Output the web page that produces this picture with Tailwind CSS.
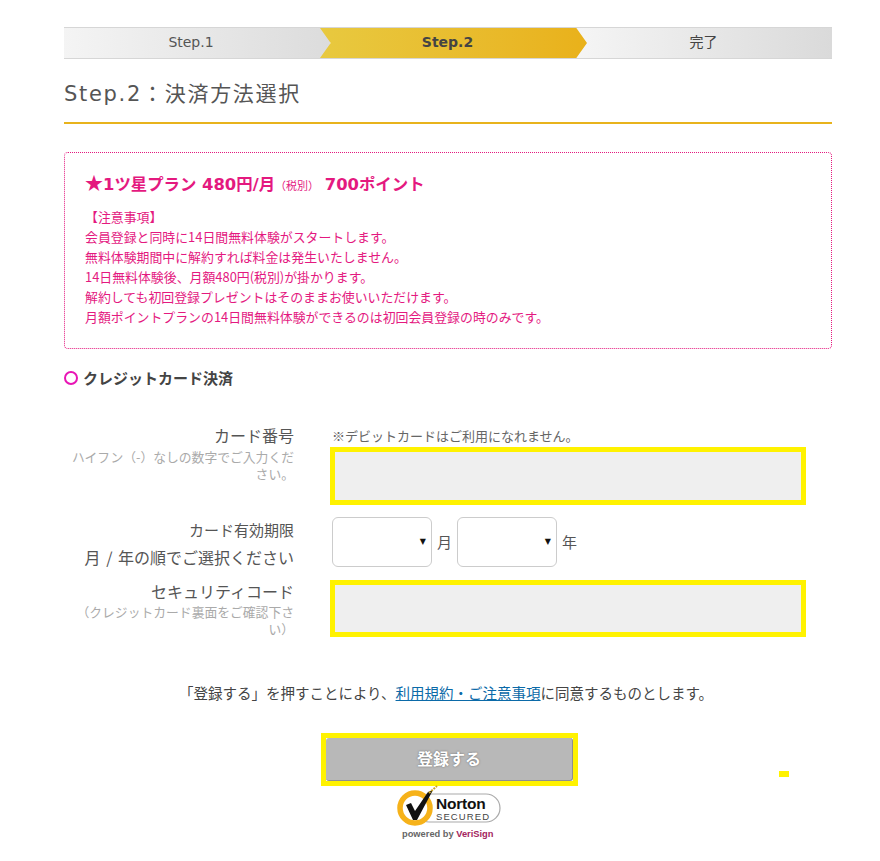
<!DOCTYPE html>
<html lang="ja">
<head>
<meta charset="UTF-8">
<title>Step.2</title>
<script src="https://cdn.jsdelivr.net/npm/@tailwindcss/browser@4"></script>
</head>
<body class="bg-white text-[#444] font-['DejaVu_Sans','Noto_Sans_CJK_JP',sans-serif]">
<main class="relative w-[880px] h-[861px] overflow-hidden pt-[27px] pl-[64px]">
  <div class="w-[768px]">
    <!-- steps -->
    <div class="flex h-[32px] border-y border-[#d6d6d6] text-[14px] leading-[28px] text-center">
      <div class="w-[266px] shrink-0 bg-gradient-to-r from-[#f4f4f4] to-[#dcdcdc] pr-[12px] text-[#555]">Step.1</div>
      <div class="relative z-10 w-[267px] shrink-0 ml-[-10px] bg-gradient-to-r from-[#e8c93f] to-[#e9b11a] pr-[12px] font-bold text-[#444] [clip-path:polygon(0_0,96%_0,100%_50%,96%_100%,0_100%,4%_50%)]">Step.2</div>
      <div class="w-[255px] shrink-0 ml-[-10px] bg-gradient-to-r from-[#f5f5f5] to-[#dadada] pr-[2px] text-[#444]">完了</div>
    </div>

    <h2 class="mt-[19px] h-[46px] border-b-2 border-[#e8b31c] text-[21px] leading-[32px] tracking-[1.7px] text-[#555] font-normal">Step.2：決済方法選択</h2>

    <!-- plan notice -->
    <div class="mt-[28px] h-[197px] rounded border border-dotted border-[#e4197f] px-[20px] pt-[17px] text-[#e4197f]">
      <p class="text-[16.4px] leading-[24px] font-bold"><span class="text-[18px] font-['Noto_Sans_CJK_JP',sans-serif]">★</span>1ツ星プラン 480円/月<span class="text-[11px] font-normal">（税別）</span> 700ポイント</p>
      <p class="mt-[8px] text-[12.9px] leading-[20px] font-['Noto_Sans_CJK_JP',sans-serif]">【注意事項】<br>会員登録と同時に14日間無料体験がスタートします。<br>無料体験期間中に解約すれば料金は発生いたしません。<br>14日無料体験後、月額480円(税別)が掛かります。<br>解約しても初回登録プレゼントはそのままお使いいただけます。<br>月額ポイントプランの14日間無料体験ができるのは初回会員登録の時のみです。</p>
    </div>

    <div class="mt-[19px] flex items-center h-[20px]">
      <span class="w-[14px] h-[14px] rounded-full border-2 border-[#e815b5]"></span>
      <span class="ml-[5px] text-[15px] font-bold text-[#444] font-['Noto_Sans_CJK_JP',sans-serif]">クレジットカード決済</span>
    </div>

    <!-- card form -->
    <div class="mt-[35px] font-['Noto_Sans_CJK_JP',sans-serif]">
      <div class="flex h-[82px]">
        <div class="w-[230px] pl-[6px] text-right">
          <p class="text-[16px] leading-[24px] text-[#555]">カード番号</p>
          <p class="text-[12.8px] leading-[17px] text-[#aaa] mt-[1px]">ハイフン（-）なしの数字でご入力ください。</p>
        </div>
        <div class="ml-[36px] pt-[1px]">
          <p class="ml-[2px] text-[13px] leading-[23px] text-[#666]">※デビットカードはご利用になれません。</p>
          <div class="w-[476px] h-[58px] border-[5px] border-[#fff200] bg-[#efefef]"></div>
        </div>
      </div>
      <div class="flex h-[63px] mt-[12px]">
        <div class="w-[230px] text-right text-[#555]">
          <p class="text-[15px] leading-[26px]">カード有効期限</p>
          <p class="text-[16px] leading-[28px] [word-spacing:2px]">月 / 年の順でご選択ください</p>
        </div>
        <div class="ml-[38px] flex items-center h-[50px] text-[15px] text-[#555]">
          <div class="relative w-[100px] h-[50px] rounded-md border border-[#ccc]"><span class="absolute right-[5px] top-[18px] text-[8px] text-[#111] font-['DejaVu_Sans']">▼</span></div>
          <span class="ml-[5px] w-[20px]">月</span>
          <div class="relative w-[100px] h-[50px] rounded-md border border-[#ccc]"><span class="absolute right-[5px] top-[18px] text-[8px] text-[#111] font-['DejaVu_Sans']">▼</span></div>
          <span class="ml-[5px]">年</span>
        </div>
      </div>
      <div class="flex h-[57px]">
        <div class="w-[230px] text-right">
          <p class="text-[16px] leading-[22px] text-[#555]">セキュリティコード</p>
          <p class="text-[12.8px] leading-[17px] text-[#aaa] mt-[1px]">（クレジットカード裏面をご確認下さい）</p>
        </div>
        <div class="ml-[36px] w-[476px] h-[57px] border-[5px] border-[#fff200] bg-[#efefef]"></div>
      </div>
    </div>

    <p class="mt-[46px] ml-[-4px] text-center text-[14.5px] leading-[20px] text-[#444] font-['Noto_Sans_CJK_JP',sans-serif]">「登録する」を押すことにより、<a class="text-[#0b6aa8] underline">利用規約・ご注意事項</a>に同意するものとします。</p>

    <!-- submit -->
    <div class="mt-[30px] ml-[257px] w-[257px] h-[53px] border-[5px] border-[#fff200]">
      <div class="h-full rounded-[3px] bg-[#b8b8b8] border-b border-r border-[#8f8f8f] text-center text-white font-bold text-[16px] leading-[40px] [text-shadow:0_0_2px_#666] font-['Noto_Sans_CJK_JP',sans-serif]">登録する</div>
    </div>

    <!-- norton badge -->
    <svg class="ml-[331px] mt-[1px] overflow-visible" width="107" height="55" viewBox="0 0 107 55">
      <rect x="20" y="7" width="85" height="28" rx="14" fill="#fff" stroke="#aaa" stroke-width="1.2"/>
      <circle cx="20" cy="21" r="15" fill="#fff" stroke="#f6b21a" stroke-width="5.5"/>
      <path d="M11 18 L16 16 L20 24 L33 5 L38 3 L22 33 L18 33 Z" fill="#111"/>
      <path d="M34 6 L42 -1" stroke="#c9a227" stroke-width="2" stroke-dasharray="2 1"/>
      <text x="41" y="22" font-family="Liberation Sans" font-size="15.5" font-weight="700" letter-spacing="-0.2" fill="#111">Norton</text>
      <text x="41" y="33" font-family="Liberation Sans" font-size="9.5" letter-spacing="1.1" fill="#444">SECURED</text>
      <text x="7" y="50" font-family="Liberation Sans" font-size="9.3" font-weight="700" fill="#666">powered by <tspan fill="#a3245e">VeriSign</tspan></text>
    </svg>
  </div>
  <span class="absolute left-[779px] top-[771px] w-[10px] h-[6px] bg-[#fff200]"></span>
</main>
</body>
</html>
